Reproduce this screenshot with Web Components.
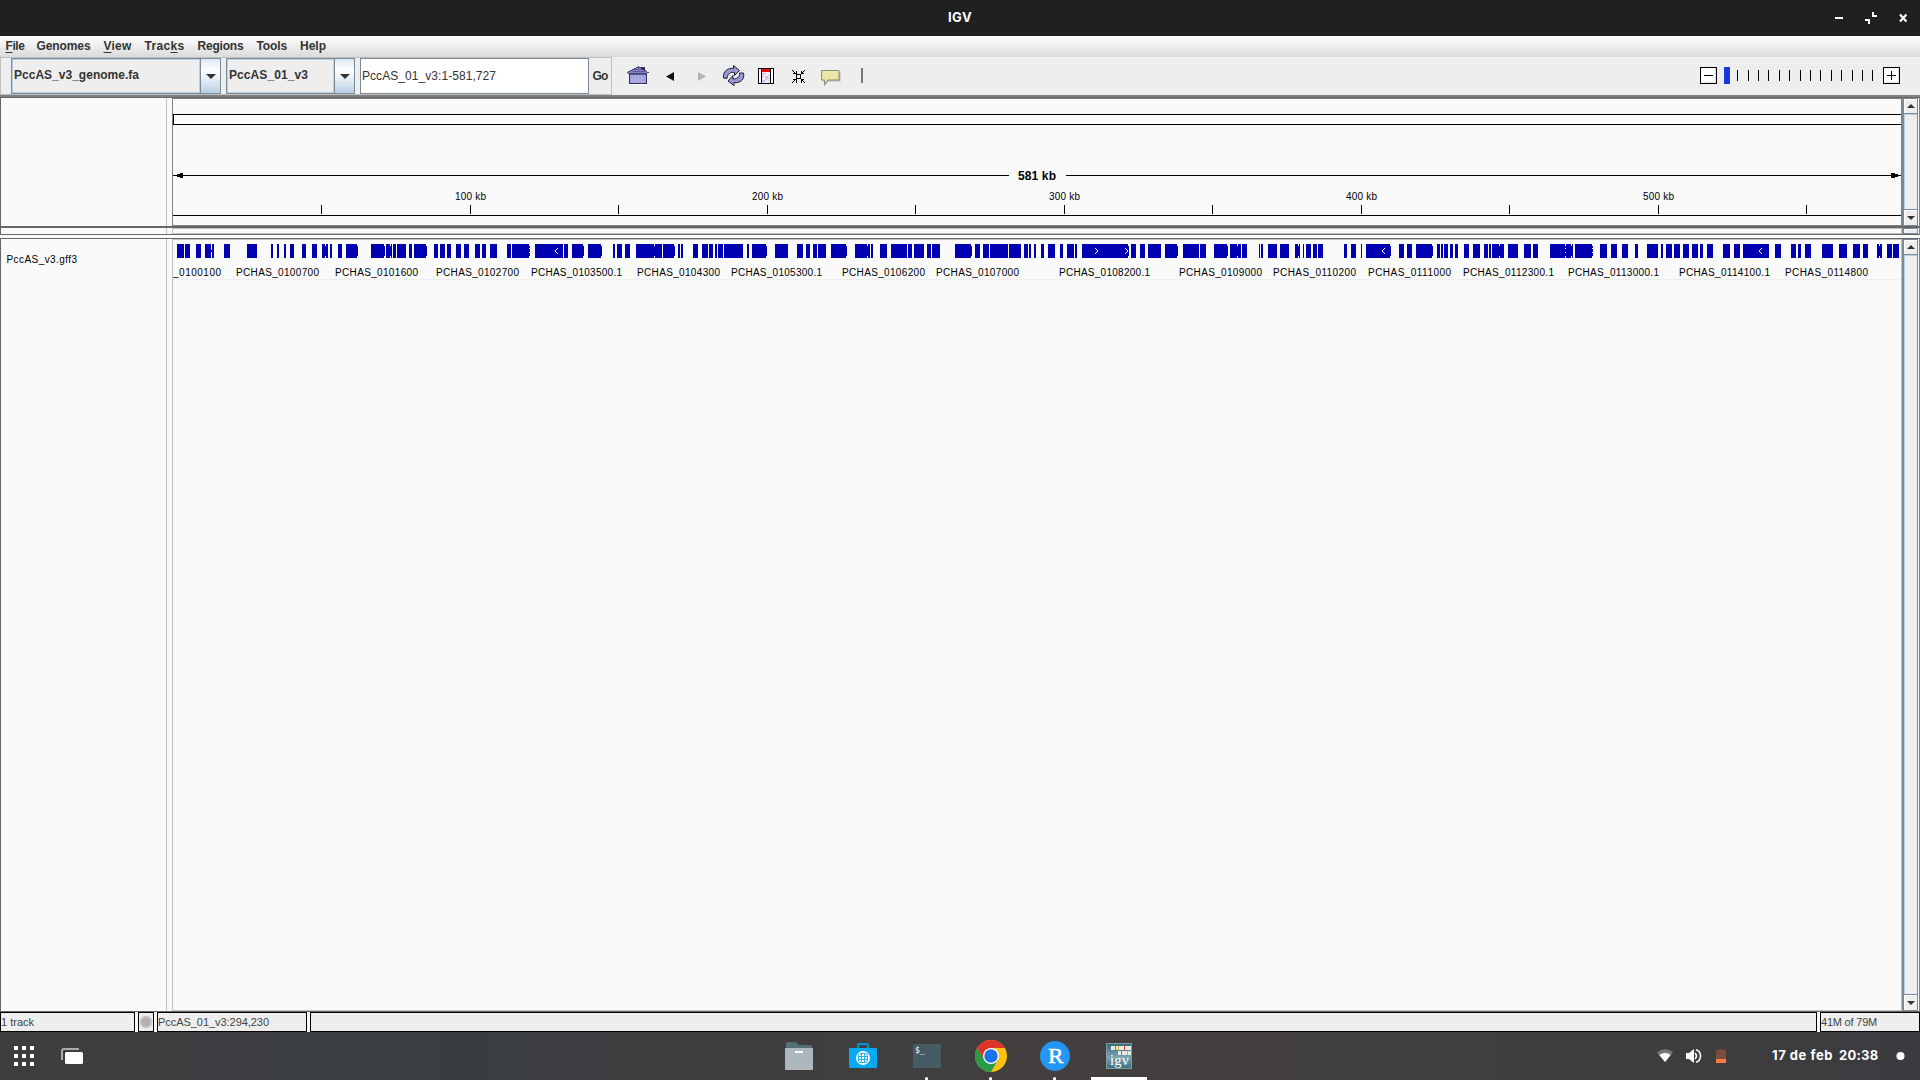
<!DOCTYPE html>
<html lang="es"><head><meta charset="utf-8"><title>IGV</title>
<style>html,body{margin:0;padding:0;overflow:hidden;background:#fafafa}</style></head><body>
<igv-window></igv-window>
<script>
const define=(name,html,init)=>customElements.define(name,class extends HTMLElement{
  connectedCallback(){
    if(this.shadowRoot)return;
    const r=this.attachShadow({mode:'open'});
    r.innerHTML=typeof html==='function'?html(this):html;
    if(init)init(this,r);
  }
});

// Single-line label whose tracking is adjusted to fill the width given in "w".
define('fit-text','<style>:host{display:block;white-space:pre;flex:none}span{display:inline-block}</style><span><slot></slot></span>',(el,r)=>{
  const w=+el.getAttribute('w'),s=r.querySelector('span'),n=el.textContent.length;
  el.style.width=w+'px';
  s.style.letterSpacing=((w-s.getBoundingClientRect().width)/n)+'px';
});

define('title-bar',`<style>:host{display:grid;grid-template-columns:1fr auto 1fr;align-items:center;height:36px;background:#202020;color:#fff;font:bold 13px/35px Inter,sans-serif;flex:none}
svg{justify-self:end;display:block;margin-right:13px}fit-text{height:36px}</style><span></span><fit-text w="24">IGV</fit-text>
<svg width="72" height="12" viewBox="1835 12 72 12"><g fill="#fff"><path d="M1835 17h8v2h-8zM1872 12h2v3h3v2h-5zM1865 19h5v5h-2v-3h-3z"/></g><path d="M1900 14.5l6.5 7M1906.500 14.500l-6.500 7" stroke="#fff" stroke-width="2.200"/></svg>`);

define('menu-bar',`<style>:host{display:flex;height:21px;flex:none;padding-left:5.5px;background:linear-gradient(#fff,#dadada);font:bold 12px/21px "Liberation Sans",sans-serif;color:#333}
u{text-decoration-thickness:1px;text-underline-offset:2px}fit-text{margin-right:var(--g)}</style>
<fit-text w="19" style="--g:12px"><u>F</u>ile</fit-text><fit-text w="54" style="--g:13px">Genomes</fit-text><fit-text w="28" style="--g:13px"><u>V</u>iew</fit-text><fit-text w="40" style="--g:13px">Trac<u>k</u>s</fit-text><fit-text w="46" style="--g:13px">Regions</fit-text><fit-text w="30.5" style="--g:13px">Tools</fit-text><fit-text w="26">Help</fit-text>`);

define('combo-box',`<style>:host{display:flex;box-sizing:border-box;height:36px;border:1px solid #7a8a99;font:bold 12px/31px "Liberation Sans",sans-serif;color:#333;flex:none}
div{flex:1;border:1px solid #b8cfe5;background:#eee;padding-left:1px}i{width:19px;border-left:1px solid #7a8a99;background:linear-gradient(#dbe7f3,#fff 32%,#f4f8fc 45%,#b8cfe5);display:flex;align-items:center;justify-content:center}</style>
<div><slot></slot></div><i><svg width="10" height="5"><path d="M0 0h10L5 5z" fill="#333"/></svg></i>`);

define('tool-icons',`<style>:host{display:block;width:237px;height:24px;flex:none}svg{display:block}</style>
<svg width="237" height="24" viewBox="627 64 237 24">
<g shape-rendering="crispEdges"><path d="M629.500 72.500h17v11h-17z" fill="#a4a4dc" stroke="#303060"/><path d="M627.500 72.500l5-3 6-2.500 3 1v-1h3v3l3.500 2.500-2 1h-17z" fill="#8585be" stroke="#404070"/><path d="M641 67h4v3h-4z" fill="#303060"/><path d="M630 74h16M632 71h13M634 69h8" stroke="#5c5c9a"/><path d="M632 76v7M635 76v7M638 76v7M641 76v7" stroke="#b4b4e8"/><path d="M628 84.500h20" stroke="#fff"/><path d="M629 83.500h17" stroke="#303060"/></g>
<path d="M666 76.500l8-4.500v9z" fill="#111"/><path d="M706 76.500l-8-4.500v9z" fill="#b4b4b4"/>
<g fill="#9999d2" stroke="#1c1c38" stroke-width="1" stroke-linejoin="round"><path d="M723.500 78c-1-7 5-10.500 10-9.500v-3l6 5-5 5v-3c-4-1-7 1.500-7.500 6z"/><path d="M743.500 73c1.500 6-3 10.500-9.500 9.500v3l-6-4.500 5-5.500v3.500c4 0 7-2 6.500-6z"/></g>
<g shape-rendering="crispEdges"><path d="M758.500 68.500h15v15h-15z" fill="#fff" stroke="#000"/><path d="M762 69h8v14h-8z" fill="#ececff"/><path d="M761.500 68v16M770.500 68v16" stroke="#000"/><path d="M762 69h8v3h-8z" fill="#f00"/><path d="M764 73h2v1h-2zM768 75h2v1h-2zM762 76h1v2h-1zM765 79h2v1h-2zM768 80h1v1h-1z" fill="#ffb0b0"/><path d="M762 73h2v2h-2zM765 76h3v2h-3zM762 80h3v2h-3zM767 78h3v1h-3z" fill="#c0c0f8"/></g>
<g shape-rendering="crispEdges" stroke="#000" fill="none"><path d="M796.500 74.500h4v4h-4z"/><path d="M793 73.500h3v-3M804 73.500h-3v-3M793 79.500h3v3M804 79.500h-3v3"/><path d="M792 70l4 4M805 70l-4 4M792 83l4-4M805 83l-4-4"/></g>
<path d="M822.500 71.500h18v10h-12l-4.500 5v-5h-1.500z" fill="#bbb"/><path d="M821.500 70.500h17.500v9.500h-11l-3.500 4.500v-4.500h-3z" fill="#ece5a4" stroke="#8c8c80"/>
<path d="M861 68h2v15h-2z" fill="#777"/></svg>`);

define('zoom-slider',`<style>:host{display:block;flex:none;margin-bottom:1px}svg{display:block}</style><svg width="200" height="17" viewBox="1700 67 200 17" shape-rendering="crispEdges">
<g fill="#fff" stroke="#000"><path d="M1700.500 67.500h16v16h-16zM1883.500 67.500h16v16h-16z"/></g><path d="M1715.500 69v13.500h-13M1898.500 69v13.500h-13" stroke="#e0e0e0" fill="none"/><path d="M1704 75.500h9M1887 75.500h9M1891.500 71v9" stroke="#000"/>
<rect x="1724.500" y="67.500" width="5" height="16" fill="#1a35d0" stroke="#1440e8"/>
<path stroke="#000" d="${[1737,1748,1758,1768,1779,1789,1800,1810,1820,1831,1841,1852,1862,1872].map(x=>`M${x}.500 70v11`).join('')}"/></svg>`);

define('tool-bar',`<style>:host{display:flex;align-items:center;height:38px;background:#eee;flex:none;font:12px/34px "Liberation Sans",sans-serif;color:#333;padding-right:20px}
.nav{display:flex;box-sizing:border-box;width:612px;height:38px;border:1px solid #c0c0c0;padding-left:10px;margin-right:15px}
.loc{box-sizing:border-box;width:229px;height:36px;background:#fff;border:1px solid #7a8a99;margin:0 4px 0 5px;padding-left:1px}
.go{font-weight:bold;line-height:36px;margin-left:-.5px}tool-icons{margin-right:auto}combo-box+combo-box{margin-left:5px}</style>
<div class="nav"><combo-box style="width:210px"><fit-text w="125">PccAS_v3_genome.fa</fit-text></combo-box><combo-box style="width:129px"><fit-text w="79">PccAS_01_v3</fit-text></combo-box><div class="loc"><fit-text w="134">PccAS_01_v3:1-581,727</fit-text></div><fit-text class="go" w="15">Go</fit-text></div><tool-icons></tool-icons><zoom-slider></zoom-slider>`);

define('scroll-bar',`<style>:host{display:flex;flex-direction:column;box-sizing:border-box;width:16px;border:1px solid #7a8a99;border-left-width:2px;background:#eee;overflow:hidden;flex:none}
i{height:14px;display:flex;align-items:center;justify-content:center;flex:none;box-shadow:inset 1px 1px #fff}.t{flex:1;border:solid #7a8a99;border-width:1px 0;box-shadow:inset 1px 1px #b8cfe5}.t+i{height:15px}</style>
<i><svg width="8" height="4"><path d="M0 4h8L4 0z" fill="#333"/></svg></i><div class="t"></div><i><svg width="8" height="4"><path d="M0 0h8L4 4z" fill="#333"/></svg></i>`);

define('track-panel',el=>`<style>:host{display:flex;box-sizing:border-box;border-left:1px solid #666;background:#fafafa;--edge:#c0c0c0;overflow:hidden}
.n{box-sizing:border-box;width:166px;border-right:1px solid #c0c0c0;font:10px/12px "Liberation Sans",sans-serif;color:#000;flex:none}
.d{flex:1;box-sizing:border-box;margin-left:5px;border:1px solid var(--edge);min-width:0;overflow:hidden}scroll-bar{margin-right:1px}.e{width:1px;background:#808080}</style>
<div class="n"><slot name="name"></slot></div><div class="d"><slot></slot></div><scroll-bar></scroll-bar><div class="e"></div>`);

define('genome-ruler',()=>{
  let t='',l='';
  for(let i=1;i<12;i++){const x=Math.floor(173+i*148.5)+.5;t+=`M${x} 205v9`;
    if(i%2===0)l+=`<text x="${x-15.500}" y="200" textLength="31">${i*50} kb</text>`}
  return `<style>:host{display:block}svg{display:block}text{font:10px "Liberation Sans",sans-serif}.b{font:bold 12px "Liberation Sans",sans-serif}</style>
<svg width="1728" height="126" viewBox="173 99 1728 126"><g shape-rendering="crispEdges" stroke="#000" fill="none"><path d="M1902 114.500H173.500v10H1902" fill="#fff"/><path d="M173 175.500h836M1066 175.500h835M173 215.500h1728"/><path d="${t}"/></g>
<path shape-rendering="crispEdges" d="M177 174h3v-1h3v5h-3v-1h-3zM1898 174h-3v-1h-4v5h4v-1h3z"/>
<text class="b" x="1018" y="180" textLength="38">581 kb</text>${l}</svg>`});

define('gene-track',()=>{
  const g=`177-184 185-190 196-201 205-211 212-214 224-230 247-257 271-273 277-279 284-286 290-294 302-306 312-317 322-328 330-332 338-342 346-358 371-385 386-392 393-396 397-406 409-412 414-427 434-438 440-445 447-451 456-461 464-469 475-480 482-486 490-497 507-511 512-530 535-563 564-568 572-584 588-602 613-615 617-622 625-630 636-662 663-675 678-680 681-683 693-698 702-708 709-713 715-717 718-723 724-743 747-749 752-767 775-788 797-803 806-810 813-817 818-826 831-847 855-870 871-873 880-887 891-907 908-912 914-924 927-931 932-940 955-972 975-980 983-989 990-1008 1009-1021 1024-1028 1029-1031 1034-1036 1041-1044 1048-1055 1060-1063 1067-1074 1075-1077 1082-1129 1131-1136 1140-1145 1148-1161 1165-1178 1183-1199 1200-1206 1214-1228 1230-1241 1242-1247 1259-1260 1261-1263 1268-1277 1280-1289 1295-1300 1303-1304 1306-1311 1313-1317 1318-1323 1344-1347 1351-1356 1361-1362 1366-1391 1399-1404 1407-1412 1416-1433 1437-1440 1441-1443 1444-1448 1450-1453 1455-1458 1464-1469 1473-1480 1484-1488 1489-1491 1492-1504 1508-1518 1524-1531 1533-1538 1550-1573 1575-1593 1600-1607 1611-1617 1622-1628 1635-1638 1647-1658 1661-1663 1666-1672 1674-1680 1683-1689 1692-1698 1700-1703 1707-1713 1723-1730 1734-1740 1743-1769 1775-1781 1791-1796 1798-1801 1805-1811 1822-1833 1839-1847 1853-1860 1863-1868 1877-1882 1887-1892 1893-1899`.split(' ').map(s=>{const[a,b]=s.split('-');return`M${a} 244h${b-a}v14h${a-b}z`}).join('');
  const labels=[[173,'_0100100',48],[236,'PCHAS_0100700'],[335,'PCHAS_0101600'],[436,'PCHAS_0102700'],[531,'PCHAS_0103500.1'],[637,'PCHAS_0104300'],[731,'PCHAS_0105300.1'],[842,'PCHAS_0106200'],[936,'PCHAS_0107000'],[1059,'PCHAS_0108200.1'],[1179,'PCHAS_0109000'],[1273,'PCHAS_0110200'],[1368,'PCHAS_0111000'],[1463,'PCHAS_0112300.1'],[1568,'PCHAS_0113000.1'],[1679,'PCHAS_0114100.1'],[1785,'PCHAS_0114800']];
  const chev=[[557,-1],[1096,1],[1126,1],[1384,-1],[1761,-1]].map(([x,d])=>`M${x-d} 248l${3*d} 3l${-3*d} 3`).join('');
  const notch=[325,384,390,529,654,867,1128,1237,1298,1499,1565,1571,1592,1879].map(x=>`M${x} 244h1v2h-1zM${x} 256h1v2h-1z`).join('');
  const ends=[357,426,583,601,674,766,846,971,1177,1227,1390,1432].map(x=>`M${x} 244h1v2h-1zM${x} 256h1v2h-1z`).join('');
  return `<style>:host{display:block}svg{display:block}text{font:10px "Liberation Sans",sans-serif}</style>
<svg width="1728" height="60" viewBox="173 240 1728 60"><path shape-rendering="crispEdges" fill="#0000b2" d="${g}M211 250h1v2h-1z"/><path shape-rendering="crispEdges" fill="#fafafa" d="${notch+ends}M529 248h1v1h-1zM529 252h1v1h-1zM1565 248h1v1h-1zM1565 252h1v1h-1zM1592 248h1v1h-1zM1592 252h1v1h-1z"/><path d="${chev}" stroke="#fff" fill="none"/>
<path d="M173 279.500h1728" stroke="#eee"/>${labels.map(([x,s,w])=>`<text x="${x}" y="276" textLength="${w||(s.length>13?91:83)}">${s}</text>`).join('')}</svg>`});

define('status-bar',`<style>:host{display:flex;height:20px;background:#f8f8f8;flex:none;font:11px/18px "Liberation Sans",sans-serif;color:#444;gap:3px}
div{box-sizing:border-box;border:1px solid #000;background:#eee;display:flex;align-items:center}.a{width:135px}.b{width:16px;justify-content:center}.c{width:150px}.d{flex:1}.e{width:100px}</style>
<div class="a"><fit-text w="33">1 track</fit-text></div><div class="b"><svg width="14" height="14"><circle cx="7" cy="7" r="6.500" fill="#c8c8c8"/><circle cx="7" cy="7" r="4.500" fill="#b2b2b2"/></svg></div><div class="c"><fit-text w="111">PccAS_01_v3:294,230</fit-text></div><div class="d"></div><div class="e"><fit-text w="56">41M of 79M</fit-text></div>`);

define('task-bar',`<style>:host{display:flex;height:48px;flex:none;position:relative;background:linear-gradient(90deg,#3c3d3f 0,#3a3d40 25%,#403e3f 45%,#443f3f 58%,#403e3f 75%,#3b3c3f);color:#fff;font:bold 13px/47px Inter,sans-serif;justify-content:space-between}
svg{display:block;flex:none;font-weight:normal}.l,.r{width:360px}.r{display:flex}fit-text{height:48px}</style>
<svg class="l" height="48" viewBox="0 1032 360 48"><path fill="#fff" d="${[14,22,30].map(x=>[1046,1054,1062].map(y=>`M${x} ${y}h4v4h-4z`).join('')).join('')}"/><path d="M62 1060v-9q0-2 2-2h15" stroke="#aaa" stroke-width="2" fill="none"/><rect x="65" y="1052" width="18" height="12" rx="1.500" fill="#fff"/></svg>
<svg width="400" height="48" viewBox="760 1032 400 48">
<path d="M786 1046v-3q0-1 1-1h9l3 3h12q1 0 1 1v6h-26z" fill="#546e7a"/><rect x="785" y="1048" width="28" height="22" rx="1" fill="#adb8be"/><rect x="795" y="1051" width="8" height="2" fill="#fff"/>
<path d="M858 1048v-3q0-1 1-1h8q1 0 1 1v3" fill="none" stroke="#0395d6" stroke-width="2"/><rect x="849" y="1048" width="28" height="20" rx="1" fill="#08a9f4"/><circle cx="863" cy="1058" r="7" fill="#fff"/><rect x="858.500" y="1053.500" width="9" height="9" rx="2" fill="none" stroke="#08a9f4" stroke-width=".9"/><path d="M858 1056.500h10M858 1059.500h10M861.500 1053v10M864.500 1053v10" stroke="#08a9f4" stroke-width=".9"/>
<rect x="913" y="1044" width="28" height="24" rx="1" fill="#455a64"/><text x="915" y="1053" font-family="DejaVu Sans Mono" font-size="8" fill="#fff">$_</text>
<circle cx="991" cy="1056" r="16" fill="#fbc116"/><path d="M991 1048h13.900A16 16 0 0 0 977.100 1048l6.900 12z" fill="#dc3428"/><path d="M977.100 1048A16 16 0 0 0 991 1072l6.900-12-6.900-4-6.900 4z" fill="#2a9a48"/><circle cx="991" cy="1056" r="8" fill="#fff"/><circle cx="991" cy="1056" r="6.700" fill="#1a73e8"/>
<circle cx="1055" cy="1056" r="15" fill="#2196f3"/><text x="1048" y="1063" font-family="Liberation Serif" font-size="22" fill="#fff" stroke="#fff" stroke-width=".5" textLength="15.500" lengthAdjust="spacingAndGlyphs">R</text>
<defs><linearGradient id="g" x2="0" y2="1"><stop stop-color="#356876"/><stop offset=".55" stop-color="#7aa6b4"/><stop offset="1" stop-color="#387080"/></linearGradient></defs><rect x="1106.500" y="1043.500" width="25" height="25" fill="url(#g)" stroke="#8099a0"/><path d="M1111 1046h20v4h-20zM1118 1051h13v4h-13z" fill="#e8e8e4"/><path d="M1115 1046h1v4h-1zM1124 1046h1v4h-1zM1121 1051h1v4h-1z" fill="#e84830"/><path d="M1118 1046h1v4h-1zM1127 1051h1v4h-1z" fill="#e0b020"/><text x="1110" y="1065" font-family="Liberation Serif" font-size="14.500" fill="#fff" textLength="19">igv</text>
<g fill="#fff"><path d="M925 1080v-2q1.500-2 3 0v2zM989 1080v-2q1.500-2 3 0v2zM1053 1080v-2q1.500-2 3 0v2zM1091 1077h56v3h-56z"/></g></svg>
<div class="r"><svg width="212" height="48" viewBox="1560 1032 212 48"><path d="M1657 1052.500q8-6.500 16 0l-8 9.500z" fill="#777"/><path d="M1659.300 1055q5.700-4 11.400 0l-5.700 7z" fill="#fff"/><path d="M1686 1053h3l5-4v14l-5-4h-3z" fill="#fff"/><path d="M1695 1053q3 3 0 6M1696 1049.800c6 2 6 10.500 0 12.500" stroke="#fff" stroke-width="1.600" fill="none"/><path d="M1716 1050h3v-1h4v1h3v9h-10z" fill="#7a4c3b"/><path d="M1716 1059h10v4h-10z" fill="#ff7a40"/></svg><fit-text w="61">17 de feb</fit-text><fit-text w="39.500" style="margin-left:6px">20:38</fit-text><svg width="41" height="48"><circle cx="21.500" cy="24" r="4" fill="#fff"/></svg></div>`);

define('igv-window',`<style>:host{display:flex;flex-direction:column;width:1920px;height:1080px;background:#fafafa}
.bar{height:3px;background:linear-gradient(#808080 0 2px,#666 2px);flex:none}.p1{height:128px;--edge:#808080;flex:none}.mid{height:2px;background:#666;flex:none}
.p2{height:7px;border-bottom:1px solid #666;flex:none}.p3{flex:1;min-height:0;margin-top:3px;border-top:1px solid #666;border-bottom:1px solid #666}fit-text{padding:15px 0 0 5.500px}</style>
<title-bar></title-bar><menu-bar></menu-bar><tool-bar></tool-bar><div class="bar"></div>
<track-panel class="p1"><genome-ruler></genome-ruler></track-panel><div class="mid"></div><track-panel class="p2"></track-panel>
<track-panel class="p3"><fit-text slot="name" w="71">PccAS_v3.gff3</fit-text><gene-track></gene-track></track-panel>
<status-bar></status-bar><task-bar></task-bar>`);
</script></body></html>
